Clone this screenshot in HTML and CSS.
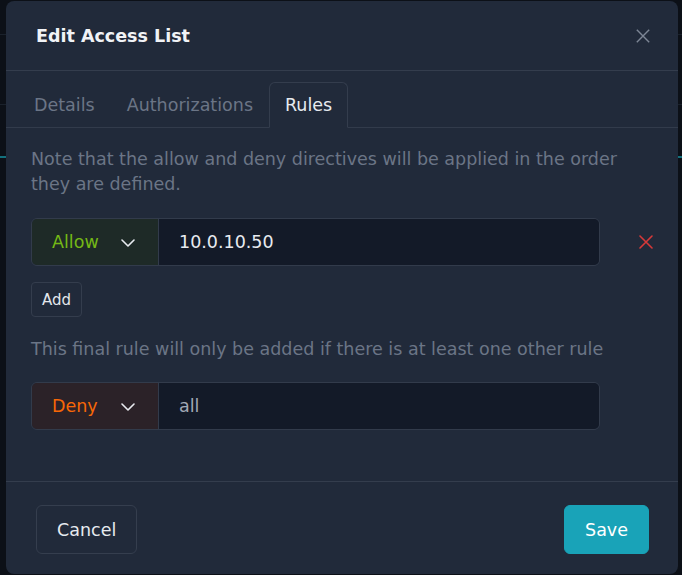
FILE: index.html
```html
<!DOCTYPE html>
<html lang="en">
<head>
<meta charset="utf-8">
<title>Edit Access List</title>
<link rel="stylesheet" href="styles.css">
</head>
<body>
<div class="page">
  <div class="modal">
    <div class="modal-header">
      <h2 class="modal-title">Edit Access List</h2>
      <button class="btn-close" aria-label="Close">
        <svg viewBox="0 0 14 14" width="14" height="14"><path d="M0.8 0.8L13.2 13.2M13.2 0.8L0.8 13.2" stroke="currentColor" stroke-width="1.4" fill="none"/></svg>
      </button>
    </div>
    <div class="nav-tabs">
      <a class="tab">Details</a>
      <a class="tab">Authorizations</a>
      <a class="tab active">Rules</a>
    </div>
    <div class="modal-body">
      <p class="hint">Note that the allow and deny directives will be applied in the order they are defined.</p>
      <div class="rule-row">
        <div class="input-group">
          <div class="select select-allow">
            <span>Allow</span>
            <svg class="chev" viewBox="0 0 14 8" width="14" height="8"><path d="M1 1l6 6l6 -6" stroke="currentColor" stroke-width="1.6" fill="none" stroke-linecap="round" stroke-linejoin="round"/></svg>
          </div>
          <div class="input">10.0.10.50</div>
        </div>
        <div class="remove">
          <svg viewBox="0 0 14 14" width="14" height="14"><path d="M1 1L13 13M13 1L1 13" stroke="currentColor" stroke-width="1.6" fill="none" stroke-linecap="round"/></svg>
        </div>
      </div>
      <button class="btn-add">Add</button>
      <p class="hint hint-final">This final rule will only be added if there is at least one other rule</p>
      <div class="rule-row final-row">
        <div class="input-group">
          <div class="select select-deny">
            <span>Deny</span>
            <svg class="chev" viewBox="0 0 14 8" width="14" height="8"><path d="M1 1l6 6l6 -6" stroke="currentColor" stroke-width="1.6" fill="none" stroke-linecap="round" stroke-linejoin="round"/></svg>
          </div>
          <div class="input input-muted">all</div>
        </div>
        <div class="remove"></div>
      </div>
    </div>
    <div class="modal-footer">
      <button class="btn btn-cancel">Cancel</button>
      <button class="btn btn-save">Save</button>
    </div>
  </div>
</div>
</body>
</html>
```
FILE: styles.css
```css
* { box-sizing: border-box; }
html, body { margin: 0; padding: 0; }
body {
  font-family: "DejaVu Sans", "Liberation Sans", sans-serif;
  font-size: 17.5px;
  line-height: 25px;
  background: #0c1017;
  overflow: hidden;
}
.page {
  height: 575px;
  padding: 1px 4px 0 6px;
  background:
    linear-gradient(#1a212b, #1a212b) 0 34px / 100% 1px no-repeat,
    linear-gradient(#1a212b, #1a212b) 0 104px / 100% 1px no-repeat,
    linear-gradient(#13707d, #13707d) 0 156px / 100% 2px no-repeat,
    #0c1017;
}
.modal {
  width: 672px;
  height: 573px;
  background: #212a3a;
  border-radius: 8px;
  display: flex;
  flex-direction: column;
  overflow: hidden;
}
.modal-header {
  height: 70px;
  flex: none;
  border-bottom: 1px solid #343d4d;
  display: flex;
  align-items: center;
  justify-content: space-between;
  padding: 1px 28px 0 30px;
}
.modal-title {
  margin: 0;
  font-size: 17.5px;
  font-weight: bold;
  color: #f1f3f6;
}
.btn-close {
  background: none;
  border: 0;
  padding: 0;
  width: 14px;
  height: 14px;
  color: #7d8695;
  display: flex;
}
.nav-tabs {
  flex: none;
  display: flex;
  padding: 11px 12px 0;
  border-bottom: 1px solid #323b4b;
}
.tab {
  display: block;
  padding: 0 15px;
  line-height: 44px;
  border: 1px solid transparent;
  border-radius: 6px 6px 0 0;
  margin-bottom: -1px;
  color: #6b7586;
}
.tab.active {
  color: #e7eaef;
  background: #212a3a;
  border-color: #343d4d #343d4d #212a3a;
}
.modal-body {
  flex: 1;
  padding: 19px 25px 0;
}
.hint {
  margin: 0;
  color: #6b7586;
}
.hint-final { margin-top: 20px; }
.rule-row {
  display: flex;
  margin-top: 21px;
}
.final-row { margin-top: 20px; }
.input-group {
  flex: 1;
  height: 48px;
  display: flex;
  border: 1px solid #323b4b;
  border-radius: 6px;
  overflow: hidden;
}
.select {
  width: 127px;
  flex: none;
  display: flex;
  align-items: center;
  justify-content: space-between;
  padding: 1px 23px 0 20px;
  border-right: 1px solid #323b4b;
}
.chev { color: #e8ebf0; }
.select-allow { background: #1e2a27; color: #74b816; }
.select-deny { background: #2b2228; color: #f76707; }
.input {
  flex: 1;
  background: #131a28;
  display: flex;
  align-items: center;
  padding: 1px 0 0 20px;
  color: #e8ebf0;
}
.input-muted { color: #a2a9b5; }
.remove {
  width: 53px;
  flex: none;
  display: flex;
  align-items: center;
  justify-content: flex-end;
  color: #d63939;
}
.btn-add {
  display: block;
  margin-top: 16px;
  height: 35px;
  padding: 0 10px;
  background: transparent;
  border: 1px solid #343d4d;
  border-radius: 4px;
  color: #e3e6eb;
  font-family: inherit;
  font-size: 15px;
}
.modal-footer {
  flex: none;
  border-top: 1px solid #343d4d;
  padding: 23px 29px 20px 30px;
  display: flex;
  justify-content: space-between;
}
.btn {
  height: 49px;
  padding: 0 20px;
  border-radius: 6px;
  font-family: inherit;
  font-size: 17.5px;
}
.btn-cancel {
  background: transparent;
  border: 1px solid #353e4e;
  color: #e7eaef;
}
.btn-save {
  background: #19a3b8;
  border: 1px solid #19a3b8;
  color: #ffffff;
  padding: 0 20px;
}
```
